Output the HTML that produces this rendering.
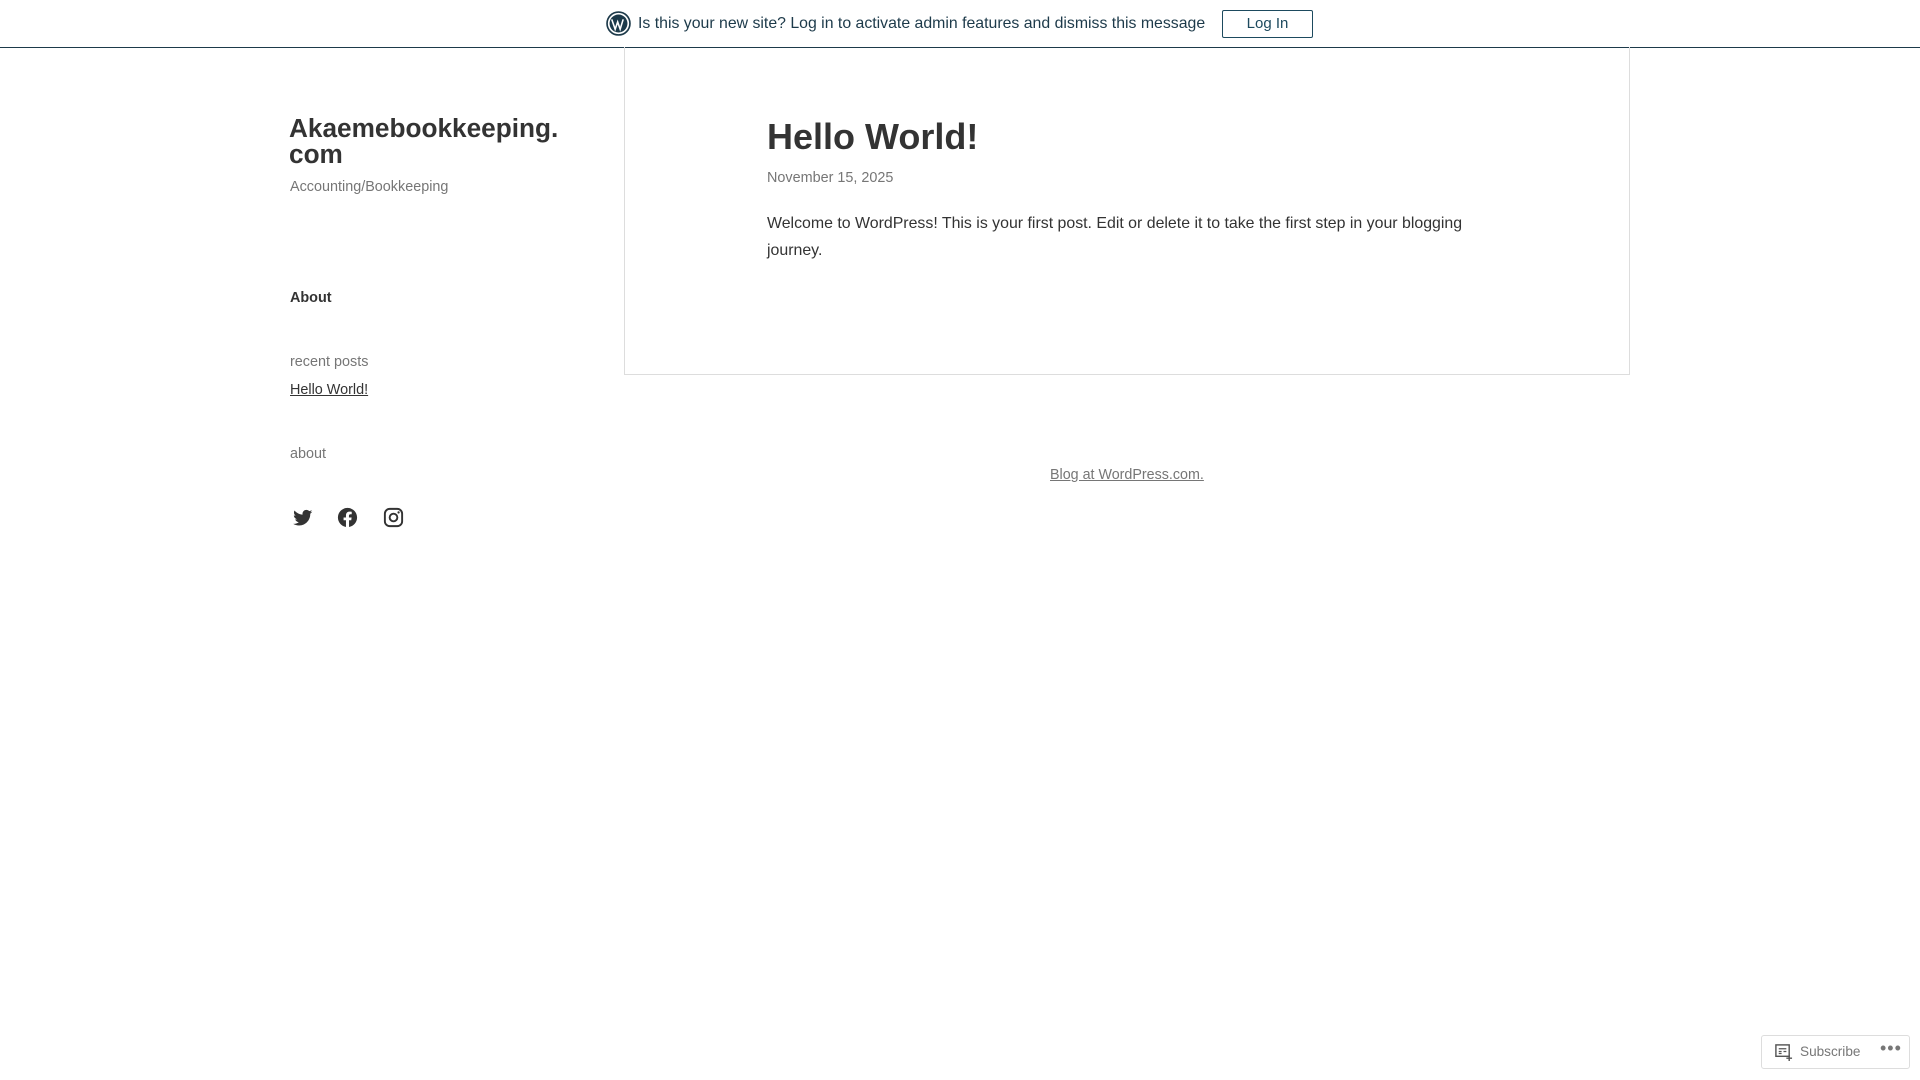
<!DOCTYPE html>
<html><head><meta charset="utf-8"><style>
*{margin:0;padding:0;box-sizing:border-box}
body{width:1920px;height:1080px;background:#fff;font-family:"Liberation Sans",sans-serif;position:relative;overflow:hidden;color:#333}
.bar{position:absolute;left:0;top:0;width:1920px;height:48px;border-bottom:1px solid #1d3a4a;background:#fff}
.abs{position:absolute;white-space:nowrap}
.btn{position:absolute;left:1222px;top:10px;width:91px;height:28px;border:1px solid #1d4a5e;border-radius:2px;font-size:15px;color:#1d4a5e;text-align:center;line-height:26px;background:#fff}
.box{position:absolute;left:624px;top:47px;width:1006px;height:328px;border:1px solid #ddd;border-top:none}
</style></head><body>
<div class="bar"></div>
<svg class="abs" style="left:606px;top:11px" width="25" height="25" viewBox="0 0 24 24"><circle cx="12" cy="12" r="11" fill="none" stroke="#1d3a4a" stroke-width="1.6"/><circle cx="12" cy="12" r="8.6" fill="#1d3a4a"/><path d="M5.5 8l3.3 9.5 2.4-7 2.4 7L16.5 8" fill="none" stroke="#fff" stroke-width="1.5"/></svg>
<div class="abs" style="left:638px;top:15px;font-size:15.85px;color:#1d3a4a">Is this your new site? Log in to activate admin features and dismiss this message</div>
<div class="btn">Log In</div>

<div class="abs" style="left:289px;top:115px;font-size:26.2px;font-weight:bold;line-height:26px;color:#333">Akaemebookkeeping.<br>com</div>
<div class="abs" style="left:290px;top:179px;font-size:14.4px;color:#767676">Accounting/Bookkeeping</div>
<div class="abs" style="left:290px;top:290px;font-size:14.4px;font-weight:bold;color:#333">About</div>
<div class="abs" style="left:290px;top:354px;font-size:14.4px;color:#767676">recent posts</div>
<div class="abs" style="left:290px;top:382px;font-size:14.4px;color:#333;text-decoration:underline">Hello World!</div>
<div class="abs" style="left:290px;top:446px;font-size:14.4px;color:#767676">about</div>

<svg class="abs" style="left:291px;top:506px" width="23" height="23" viewBox="0 0 24 24"><path fill="#333" d="M22.2 5.9c-.7.3-1.5.5-2.3.6.8-.5 1.5-1.3 1.8-2.2-.8.5-1.7.8-2.6 1-.8-.8-1.9-1.3-3-1.3-2.3 0-4.1 1.8-4.1 4.1 0 .3 0 .6.1.9C8.7 8.8 5.700 7.2 3.7 4.7c-.4.6-.6 1.3-.6 2.1 0 1.4.7 2.7 1.8 3.4-.7 0-1.3-.2-1.9-.5 0 2 1.4 3.7 3.3 4.1-.6.2-1.3.2-1.9.1.5 1.6 2 2.8 3.8 2.9-1.4 1.1-3.2 1.8-5.1 1.8-.3 0-.7 0-1-.1 1.8 1.2 4 1.8 6.3 1.8 7.5 0 11.7-6.3 11.7-11.7v-.5c.8-.6 1.5-1.3 2.1-2.2z"/></svg>
<svg class="abs" style="left:336px;top:506px" width="23" height="23" viewBox="0 0 24 24"><path fill="#333" d="M12 2C6.5 2 2 6.5 2 12c0 5 3.7 9.1 8.4 9.9v-7H7.9V12h2.5V9.8c0-2.5 1.5-3.9 3.8-3.9 1.1 0 2.2.2 2.2.2v2.5h-1.3c-1.2 0-1.6.8-1.6 1.6V12h2.8l-.4 2.9h-2.3v7C18.3 21.1 22 17 22 12c0-5.5-4.5-10-10-10z"/></svg>
<svg class="abs" style="left:382px;top:506px" width="23" height="23" viewBox="0 0 24 24"><rect x="3" y="3" width="18" height="18" rx="5" fill="none" stroke="#333" stroke-width="2"/><circle cx="12" cy="12" r="4" fill="none" stroke="#333" stroke-width="2"/><circle cx="17.3" cy="6.7" r="1.2" fill="#333"/></svg>

<div class="box"></div>
<div class="abs" style="left:767px;top:116px;font-size:36px;font-weight:bold;color:#333">Hello World!</div>
<div class="abs" style="left:767px;top:170px;font-size:14.4px;color:#767676">November 15, 2025</div>
<div class="abs" style="left:767px;top:210px;font-size:15.9px;line-height:27px;color:#333;white-space:normal;width:710px">Welcome to WordPress! This is your first post. Edit or delete it to take the first step in your blogging journey.</div>
<div class="abs" style="left:1050px;top:467px;font-size:14.3px;color:#767676;text-decoration:underline">Blog at WordPress.com.</div>

<div class="abs" style="left:1761px;top:1035px;width:149px;height:34px;border:1px solid #ddd;border-radius:3px;background:#fff"></div>
<svg class="abs" style="left:1774px;top:1043px" width="19" height="19" viewBox="0 0 20 20"><rect x="2" y="2" width="14" height="12" fill="none" stroke="#555" stroke-width="1.5"/><path d="M5 6h8M5 9h3M10 9h3M5 11h3" stroke="#555" stroke-width="1.3"/><path d="M16 13v6M13 16h6" stroke="#555" stroke-width="1.5"/></svg>
<div class="abs" style="left:1800px;top:1044px;font-size:13.6px;color:#777">Subscribe</div>
<div class="abs" style="left:1880px;top:1038px;font-size:18px;color:#777;letter-spacing:1px">•••</div>
</body></html>
